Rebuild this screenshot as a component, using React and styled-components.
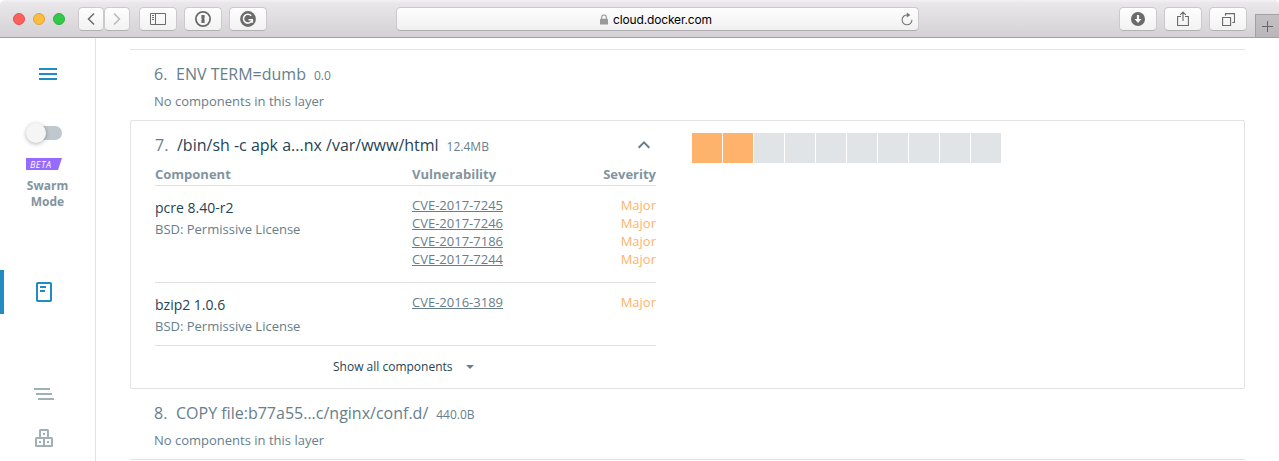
import React from "react";
import styled, { createGlobalStyle } from "styled-components";

const Global = createGlobalStyle`
  * { box-sizing: border-box; }
  body { margin: 0; background: #fff; overflow: hidden; font-family: "Open Sans", sans-serif; }
  svg { display: block; flex: none; }
`;

const Window = styled.div`
  width: 1279px;
  height: 461px;
  display: flex;
  flex-direction: column;
  overflow: hidden;
`;

const Toolbar = styled.header`
  height: 38px;
  flex: none;
  display: flex;
  align-items: flex-start;
  padding: 7px 0 0 13px;
  background: linear-gradient(#f3f1f3 0, #e9e7e9 3px, #d3d1d3 100%);
  border-bottom: 1px solid #a2a0a2;
  border-radius: 5px 5px 0 0;
`;

const Lights = styled.div`
  display: flex;
  gap: 8px;
  padding-top: 6px;
  margin-right: 13px;
`;

const Light = styled.span`
  width: 12px;
  height: 12px;
  border-radius: 50%;
  background: ${(p) => p.$fill};
  border: 1px solid ${(p) => p.$edge};
`;

const Button = styled.button`
  width: ${(p) => p.$w || 38}px;
  height: 24px;
  padding: 0;
  margin: 0 ${(p) => p.$after || 0}px 0 0;
  flex: none;
  display: flex;
  align-items: center;
  justify-content: center;
  border: 1px solid #cbc9cb;
  border-bottom-color: #b3b1b3;
  border-radius: 4.5px;
  background: linear-gradient(#fefefe, #f2f2f2);
  color: #6b6b6b;
`;

const Address = styled.div`
  width: 523px;
  height: 24px;
  flex: none;
  margin: 0 200px 0 129px;
  display: flex;
  align-items: center;
  border: 1px solid #cbc9cb;
  border-bottom-color: #b0aeb0;
  border-radius: 4.5px;
  background: linear-gradient(#fefefe, #f0f0f0);
  padding: 0 5px 0 203px;
`;

const Host = styled.span`
  flex: 1;
  margin-left: 5px;
  padding-top: 2px;
  font: 12px/22px Inter, "Liberation Sans", sans-serif;
  color: #000;
  letter-spacing: -0.15px;
`;

const NewTab = styled.div`
  width: 24px;
  height: 23px;
  margin: 7px 0 0 8px;
  display: flex;
  align-items: center;
  justify-content: center;
  background: linear-gradient(#c3c1c3, #b8b6b8);
  border: solid #a2a0a2;
  border-width: 1px 0 0 1px;
`;

const Body = styled.div`
  flex: 1;
  min-height: 0;
  display: flex;
`;

const Sidebar = styled.nav`
  width: 96px;
  flex: none;
  border-right: 1px solid #e0e2e4;
  display: flex;
  flex-direction: column;
`;

const MenuSlot = styled.div`
  padding: 30px 0 0 39px;
  height: 85px;
`;

const Track = styled.div`
  width: 34px;
  height: 14px;
  margin: 3px 0 18px 28px;
  border-radius: 7px;
  background: #bec8cd;
  display: flex;
  align-items: center;
`;

const Knob = styled.span`
  width: 20px;
  height: 20px;
  flex: none;
  margin-left: -2px;
  border-radius: 50%;
  background: #f5f5f5;
  box-shadow: 0 1px 4px rgba(0, 0, 0, 0.3);
`;

const Beta = styled.span`
  width: 36px;
  height: 12px;
  margin-left: 26px;
  padding-left: 4px;
  background: #966bff;
  color: #fff;
  font-size: 9px;
  line-height: 13px;
  font-style: italic;
  letter-spacing: 0.45px;
  clip-path: polygon(0 0, 100% 0, 32px 100%, 0 100%);
`;

const Mode = styled.div`
  width: 95px;
  margin-top: 8px;
  height: 92px;
  text-align: center;
  color: #82949e;
  font-size: 12px;
  font-weight: 700;
  line-height: 16px;
`;

const NavItem = styled.div`
  height: 44px;
  padding-left: ${(p) => (p.$active ? 32 : 34)}px;
  display: flex;
  align-items: center;
  border-left: ${(p) => (p.$active ? "4px solid #228bc3" : "0")};
  margin-bottom: ${(p) => p.$after || 0}px;
`;

const Main = styled.main`
  flex: 1;
  min-width: 0;
  padding: 11px 34px 0;
`;

const Layer = styled.section`
  padding: 12px 24px 10px;
  border: solid #e0e4e7;
  border-width: ${(p) => (p.$top ? "1px 0 0" : "0 0 1px")};
`;

const Title = styled.h2`
  margin: 0;
  height: 24px;
  display: flex;
  align-items: baseline;
  font-size: 16px;
  font-weight: 400;
  line-height: 24px;
  color: ${(p) => (p.$open ? "#254356" : "#677e8b")};
  white-space: pre;
`;

const Index = styled.span`
  width: 22px;
  color: #677e8b;
`;

const Size = styled.small`
  margin-left: 8px;
  font-size: 12px;
  color: #677e8b;
`;

const Note = styled.p`
  margin: 6px 0 0;
  font-size: 13px;
  line-height: 18px;
  color: #677e8b;
`;

const Card = styled.section`
  height: 269px;
  display: flex;
  align-items: flex-start;
  padding: 12px 24px 0;
  gap: 36px;
  border: 1px solid #e0e4e7;
  border-radius: 2px;
`;

const Details = styled.div`
  width: 501px;
`;

const CardHead = styled.div`
  display: flex;
  align-items: center;
  justify-content: space-between;
  padding-right: 5px;
`;

const Row = styled.div`
  display: grid;
  grid-template-columns: 257px 1fr auto;
  padding: ${(p) => (p.$head ? "8px 0 2px" : "10px 0")};
  border-bottom: 1px solid #e0e2e4;
  font-size: 13px;
  line-height: 18px;
  font-weight: ${(p) => (p.$head ? 700 : 400)};
  color: ${(p) => (p.$head ? "#82949e" : "#677e8b")};
`;

const Package = styled.div`
  padding-top: 2px;
`;

const Name = styled.div`
  font-size: 14px;
  line-height: 20px;
  margin-bottom: 2px;
  color: #254356;
`;

const List = styled.div`
  display: flex;
  flex-direction: column;
  align-items: flex-start;
  padding-bottom: 4px;
  color: ${(p) => (p.$severity ? "#fdb36b" : "inherit")};
`;

const Link = styled.a`
  text-decoration: underline;
  text-decoration-thickness: 1px;
  text-underline-offset: 1px;
  text-decoration-skip-ink: none;
`;

const ShowAll = styled.div`
  display: flex;
  align-items: center;
  padding: 12px 0 0 178px;
  gap: 13px;
  font-size: 12px;
  line-height: 18px;
  color: #254356;
`;

const Meter = styled.div`
  display: flex;
  gap: 1px;
`;

const Cell = styled.span`
  width: 30px;
  height: 30px;
  background: ${(p) => (p.$hit ? "#fdb36b" : "#e0e4e7")};
`;

const packages = [
  { name: "pcre 8.40-r2", cves: ["CVE-2017-7245", "CVE-2017-7246", "CVE-2017-7186", "CVE-2017-7244"] },
  { name: "bzip2 1.0.6", cves: ["CVE-2016-3189"] },
];

const Chevron = ({ back, color }) => (
  <svg width="8" height="14" viewBox="0 0 8 14" fill="none" stroke={color} strokeWidth="1.5">
    <path d={back ? "M7 1.5 1.5 7 7 12.5" : "M1 1.5 6.5 7 1 12.5"} />
  </svg>
);

function BrowserBar() {
  return (
    <Toolbar>
      <Lights>
        <Light $fill="#fc605b" $edge="#e5504c" />
        <Light $fill="#fdbc40" $edge="#e2a33a" />
        <Light $fill="#34c84a" $edge="#2bb13d" />
      </Lights>
      <Button $w={26}><Chevron back color="#6b6b6b" /></Button>
      <Button $w={26} $after={9}><Chevron color="#b9b9b9" /></Button>
      <Button $after={7}>
        <svg width="16" height="12" viewBox="0 0 16 12" fill="none" stroke="currentColor">
          <path d="M.5.5h15v11H.5zM5.5.5v11M2 2.5h2M2 4.5h2M2 6.5h2" />
        </svg>
      </Button>
      <Button $after={7}>
        <svg width="16" height="16" viewBox="0 0 16 16">
          <circle cx="8" cy="8" r="7.1" fill="none" stroke="currentColor" strokeWidth="1.8" />
          <path d="M6.4 4h3.2v3.2l-.6.6.6.6V12H6.4V8.8l.6-.6-.6-.6z" fill="currentColor" />
        </svg>
      </Button>
      <Button>
        <svg width="16" height="16" viewBox="0 0 16 16">
          <circle cx="8" cy="8" r="7.9" fill="currentColor" />
          <path d="M11.2 4.8A4.4 4.4 0 1 0 12 9.2M8.5 8.8h3.8v3" fill="none" stroke="#f8f8f8" strokeWidth="1.6" />
        </svg>
      </Button>
      <Address>
        <svg width="8" height="11" viewBox="0 0 8 11">
          <path d="M1.7 5V3.3a2.3 2.3 0 0 1 4.6 0V5" fill="none" stroke="#999" strokeWidth="1.1" />
          <rect y="4.8" width="8" height="5.7" rx=".6" fill="#999" />
        </svg>
        <Host>cloud.docker.com</Host>
        <svg width="12" height="14" viewBox="0 0 12 14">
          <path d="M6.3 3A4.9 4.9 0 1 0 10.9 7.7" fill="none" stroke="#777" strokeWidth="1.1" />
          <path d="M5.8.5 9.4 3 5.8 5.4z" fill="#777" />
        </svg>
      </Address>
      <Button $after={7}>
        <svg width="14" height="14" viewBox="0 0 14 14">
          <circle cx="7" cy="7" r="7" fill="currentColor" />
          <path d="M5.9 3h2.2v4h2.3L7 10.9 3.6 7h2.3z" fill="#fafafa" />
        </svg>
      </Button>
      <Button $after={7}>
        <svg width="12" height="16" viewBox="0 0 12 16" fill="none" stroke="currentColor" strokeWidth="1.1">
          <path d="M4 5.5H.6v9h10.8v-9H8M6 10V1.2M3.2 3.8 6 1l2.8 2.8" />
        </svg>
      </Button>
      <Button>
        <svg width="13" height="13" viewBox="0 0 13 13" fill="none" stroke="currentColor" strokeWidth="1.1">
          <path d="M.6 4.5h8v8h-8zM3.5 2.8V.6h9v8.9h-2.2" />
        </svg>
      </Button>
      <NewTab>
        <svg width="11" height="11" viewBox="0 0 11 11" stroke="#666" strokeWidth="1">
          <path d="M5.5 0v11M0 5.5h11" />
        </svg>
      </NewTab>
    </Toolbar>
  );
}

function SideNav() {
  return (
    <Sidebar>
      <MenuSlot>
        <svg width="18" height="12" viewBox="0 0 18 12" fill="#228bc3">
          <path d="M0 0h18v2H0zM0 5h18v2H0zM0 10h18v2H0z" />
        </svg>
      </MenuSlot>
      <Track><Knob /></Track>
      <Beta>BETA</Beta>
      <Mode>Swarm<br />Mode</Mode>
      <NavItem $active $after={58}>
        <svg width="16" height="20" viewBox="0 0 16 20">
          <rect x="1" y="1" width="14" height="18" rx=".7" fill="none" stroke="#228bc3" strokeWidth="2" />
          <path d="M4 4h6v2H4zM4 8h5v2H4z" fill="#228bc3" />
        </svg>
      </NavItem>
      <NavItem>
        <svg width="20" height="12" viewBox="0 0 20 12" fill="#a1afb7">
          <path d="M0 0h16v2H0zM2 5h16v2H2zM4 10h16v2H4z" />
        </svg>
      </NavItem>
      <NavItem>
        <svg width="20" height="18" viewBox="0 0 20 18" fill="none" stroke="#a1afb7" strokeWidth="2">
          <rect x="6" y="1" width="8" height="8" rx=".5" />
          <rect x="2" y="9" width="8" height="8" rx=".5" />
          <rect x="10" y="9" width="8" height="8" rx=".5" />
          <path d="M9 5h2M5 13h2M13 13h2" />
        </svg>
      </NavItem>
    </Sidebar>
  );
}

export default function App() {
  return (
    <Window>
      <Global />
      <BrowserBar />
      <Body>
        <SideNav />
        <Main>
          <Layer $top>
            <Title><Index>6.</Index>ENV TERM=dumb<Size>0.0</Size></Title>
            <Note>No components in this layer</Note>
          </Layer>
          <Card>
            <Details>
              <CardHead>
                <Title $open><Index>7.</Index>/bin/sh -c apk a...nx /var/www/html<Size>12.4MB</Size></Title>
                <svg width="14" height="10" viewBox="0 0 14 10" fill="none" stroke="#677e8b" strokeWidth="2">
                  <path d="M1.7 7.7 7 2.4l5.3 5.3" />
                </svg>
              </CardHead>
              <Row $head><span>Component</span><span>Vulnerability</span><span>Severity</span></Row>
              {packages.map((p) => (
                <Row key={p.name}>
                  <Package><Name>{p.name}</Name>BSD: Permissive License</Package>
                  <List>{p.cves.map((c) => <Link key={c}>{c}</Link>)}</List>
                  <List $severity>{p.cves.map((c) => <span key={c}>Major</span>)}</List>
                </Row>
              ))}
              <ShowAll>
                Show all components
                <svg width="8" height="4" viewBox="0 0 8 4"><path d="M0 0h8L4 4z" fill="#677e8b" /></svg>
              </ShowAll>
            </Details>
            <Meter>{Array.from({ length: 10 }, (_, i) => <Cell key={i} $hit={i < 2} />)}</Meter>
          </Card>
          <Layer>
            <Title><Index>8.</Index>COPY file:b77a55...c/nginx/conf.d/<Size>440.0B</Size></Title>
            <Note>No components in this layer</Note>
          </Layer>
        </Main>
      </Body>
    </Window>
  );
}
